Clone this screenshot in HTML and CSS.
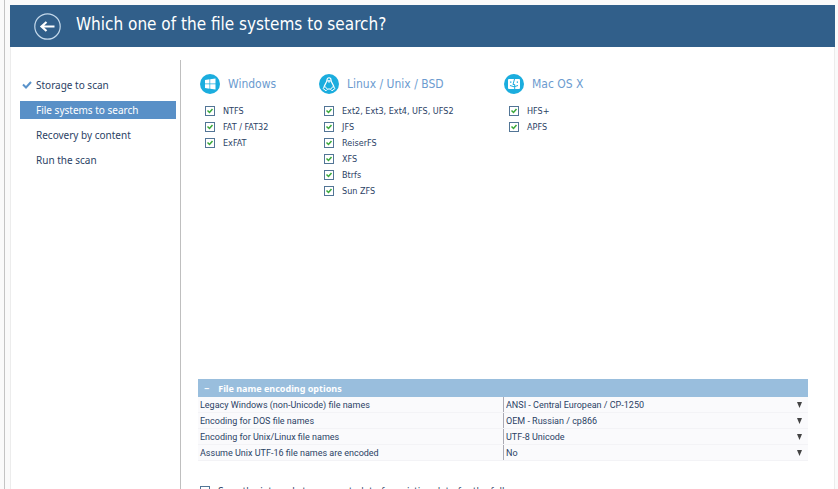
FILE: index.html
```html
<!DOCTYPE html>
<html lang="en">

<head>
    <meta charset="UTF-8">
    <meta name="viewport" content="width=device-width, initial-scale=1.0">
    <title>File systems to search</title>
    <link rel="stylesheet" href="styles.css">
</head>

<body>
    <div class="window">
        <header class="title-bar">
            <button type="button" class="back" aria-label="Back">
                <svg viewBox="0 0 27 27" width="27" height="27" fill="none" stroke="currentColor">
                    <circle cx="13.5" cy="13.5" r="12.7" stroke="#c3d8ea" stroke-width="1.2" />
                    <path d="M20.5 13.5H8M12.5 9l-5 4.500 5 4.500" stroke-width="2.2" />
                </svg>
            </button>
            <h1>Which one of the file systems to search?</h1>
        </header>

        <div class="content">
            <nav class="steps">
                <a href="#storage" class="step done">
                    <svg viewBox="0 0 10 8" width="10" height="8" fill="none" stroke="#5a93cb" stroke-width="2">
                        <path d="M1 3.5l3 3L9 1" />
                    </svg>
                    Storage to scan
                </a>
                <a href="#systems" class="step active">File systems to search</a>
                <a href="#recovery" class="step">Recovery by content</a>
                <a href="#run" class="step">Run the scan</a>
            </nav>

            <form class="options">
                <div class="systems">
                    <section class="system">
                        <h2>
                            <svg viewBox="0 0 20 20" width="20" height="20">
                                <circle cx="10" cy="10" r="10" fill="#1badde" />
                                <path d="M5 6l4.500-.7v4.300H5zM10.200 5.200L15.500 4.400v5.200h-5.300zM5 10.300h4.500v4.400L5 14zM10.200 10.300h5.300v5.300l-5.300-.8z" fill="#fff" />
                            </svg>
                            Windows
                        </h2>
                        <label><input type="checkbox" checked>NTFS</label>
                        <label><input type="checkbox" checked>FAT / FAT32</label>
                        <label><input type="checkbox" checked>ExFAT</label>
                    </section>
                    <section class="system">
                        <h2>
                            <svg viewBox="0 0 20 20" width="20" height="20">
                                <circle cx="10" cy="10" r="10" fill="#1badde" />
                                <path d="M8 6C8 3 12 3 12 6c0 3 3 4.500 3 8M8 6c0 3-3 4.500-3 8M8.500 15h3" fill="none" stroke="#fff" stroke-width="1.200" />
                                <path d="M8.500 6.700h3L10 8.500zM4 14.500l2-2 2.500 2.800-1.500 1.500zM16 14.500l-2-2-2.500 2.800 1.500 1.500z" fill="#1badde" stroke="#fff" />
                            </svg>
                            Linux / Unix / BSD
                        </h2>
                        <label><input type="checkbox" checked>Ext2, Ext3, Ext4, UFS, UFS2</label>
                        <label><input type="checkbox" checked>JFS</label>
                        <label><input type="checkbox" checked>ReiserFS</label>
                        <label><input type="checkbox" checked>XFS</label>
                        <label><input type="checkbox" checked>Btrfs</label>
                        <label><input type="checkbox" checked>Sun ZFS</label>
                    </section>
                    <section class="system">
                        <h2>
                            <svg viewBox="0 0 20 20" width="20" height="20">
                                <circle cx="10" cy="10" r="10" fill="#1badde" />
                                <rect x="4" y="5" width="12" height="10" rx="1" fill="#fff" />
                                <path d="M10.500 5L9 10.500h1.700V15M6.800 7.300v1.700M13.300 7.300v1.700M6 11.500q4 2.500 8 0" fill="none" stroke="#1badde" />
                            </svg>
                            Mac OS X
                        </h2>
                        <label><input type="checkbox" checked>HFS+</label>
                        <label><input type="checkbox" checked>APFS</label>
                    </section>
                </div>

                <div class="encoding">
                    <button type="button" class="encoding-title"><span>−</span>File name encoding options</button>
                    <div class="row">
                        <label for="legacy">Legacy Windows (non-Unicode) file names</label>
                        <select id="legacy">
                            <option>ANSI - Central European / CP-1250</option>
                        </select>
                    </div>
                    <div class="row">
                        <label for="dos">Encoding for DOS file names</label>
                        <select id="dos">
                            <option>OEM - Russian / cp866</option>
                        </select>
                    </div>
                    <div class="row">
                        <label for="unix">Encoding for Unix/Linux file names</label>
                        <select id="unix">
                            <option>UTF-8 Unicode</option>
                        </select>
                    </div>
                    <div class="row">
                        <label for="utf16">Assume Unix UTF-16 file names are encoded</label>
                        <select id="utf16">
                            <option>No</option>
                        </select>
                    </div>
                </div>

                <label class="skip"><input type="checkbox">Scan the internal storage metadata for existing data for the full</label>
            </form>
        </div>
    </div>
</body>

</html>
```
FILE: styles.css
```css
* {
    box-sizing: border-box;
}

body {
    margin: 0;
    height: 100vh;
    overflow: hidden;
    background-color: #fafafa;
    font-family: Tahoma, "DejaVu Sans Condensed", sans-serif;
    font-size: 9px;
    color: #2b4265;
}

.window {
    height: 100%;
    margin-left: 4px;
    padding: 5px 3px 0 5px;
    border-left: 1px solid #c4c4c4;
    display: flex;
    flex-direction: column;
}

.title-bar {
    display: flex;
    align-items: center;
    gap: 15px;
    height: 42px;
    flex-shrink: 0;
    padding-left: 24px;
    background-color: #315f8a;
    color: #fff;
}

.back {
    display: flex;
    padding: 0;
    border: none;
    background: none;
    color: #fff;
}

h1 {
    margin: 0 0 4px;
    font-size: 17px;
    font-weight: normal;
}

.content {
    flex: 1;
    min-height: 0;
    display: flex;
    padding-top: 13px;
    border: solid #ececec;
    border-width: 0 1px;
    background-color: #fff;
}

.steps {
    width: 170px;
    flex-shrink: 0;
    padding: 16px 4px 0 9px;
    border-right: 1px solid #bfbfbf;
}

.step {
    display: flex;
    align-items: center;
    height: 18px;
    margin-bottom: 7px;
    padding-left: 16px;
    color: #2b4265;
    font-family: Tahoma, "Noto Sans", sans-serif;
    font-size: 10px;
    text-decoration: none;
}

.step.done {
    gap: 4px;
    padding-left: 2px;
}

.step.active {
    background-color: #5990c7;
    color: #fff;
}

.options {
    flex: 1;
    padding: 14px 26px 0 17px;
}

.systems {
    display: flex;
    height: 305px;
}

.system {
    width: 185px;
    padding-left: 2px;
}

.system:first-child {
    width: 119px;
}

h2 {
    display: flex;
    align-items: center;
    gap: 8px;
    height: 20px;
    margin: 0 0 9px;
    color: #6c9bcf;
    font-size: 12px;
    font-weight: normal;
}

.system label,
.skip {
    display: flex;
    align-items: center;
    gap: 8px;
    height: 16px;
    padding-left: 5px;
}

input[type="checkbox"] {
    appearance: none;
    width: 10px;
    height: 10px;
    margin: 0;
    border: 1px solid #527596;
    background-color: #fff;
}

input[type="checkbox"]:checked {
    background-image: url("data:image/svg+xml,%3Csvg xmlns='http://www.w3.org/2000/svg' viewBox='0 0 8 8'%3E%3Cpath d='M1.500 3.500l2 2 3-3.500' fill='none' stroke='%2339a839' stroke-width='1.500'/%3E%3C/svg%3E");
}

.encoding {
    font-family: Tahoma, Roboto, sans-serif;
}

.encoding-title {
    display: flex;
    gap: 9px;
    align-items: center;
    width: 100%;
    height: 18px;
    padding: 0 6px;
    border: none;
    background-color: #99bedd;
    color: #fff;
    font-family: Tahoma, "Noto Sans", sans-serif;
    font-size: 9px;
    font-weight: bold;
}

.row {
    display: flex;
    height: 16px;
    border-bottom: 1px solid #f3f3f6;
    background-color: #fafafc;
}

.row label {
    width: 50%;
    padding-left: 2px;
    line-height: 16px;
}

select {
    appearance: none;
    width: 50%;
    padding: 0 2px;
    border: none;
    border-left: 1px solid #aaaab4;
    background: url("data:image/svg+xml,%3Csvg xmlns='http://www.w3.org/2000/svg' viewBox='0 0 5 6'%3E%3Cpath d='M0 0h5L2.500 6z' fill='%23444'/%3E%3C/svg%3E") no-repeat right 6px center / 5px 6px;
    color: inherit;
    font-family: inherit;
    font-size: 9px;
}

.skip {
    margin-top: 22px;
    padding-left: 2px;
    font-size: 10px;
}
```
